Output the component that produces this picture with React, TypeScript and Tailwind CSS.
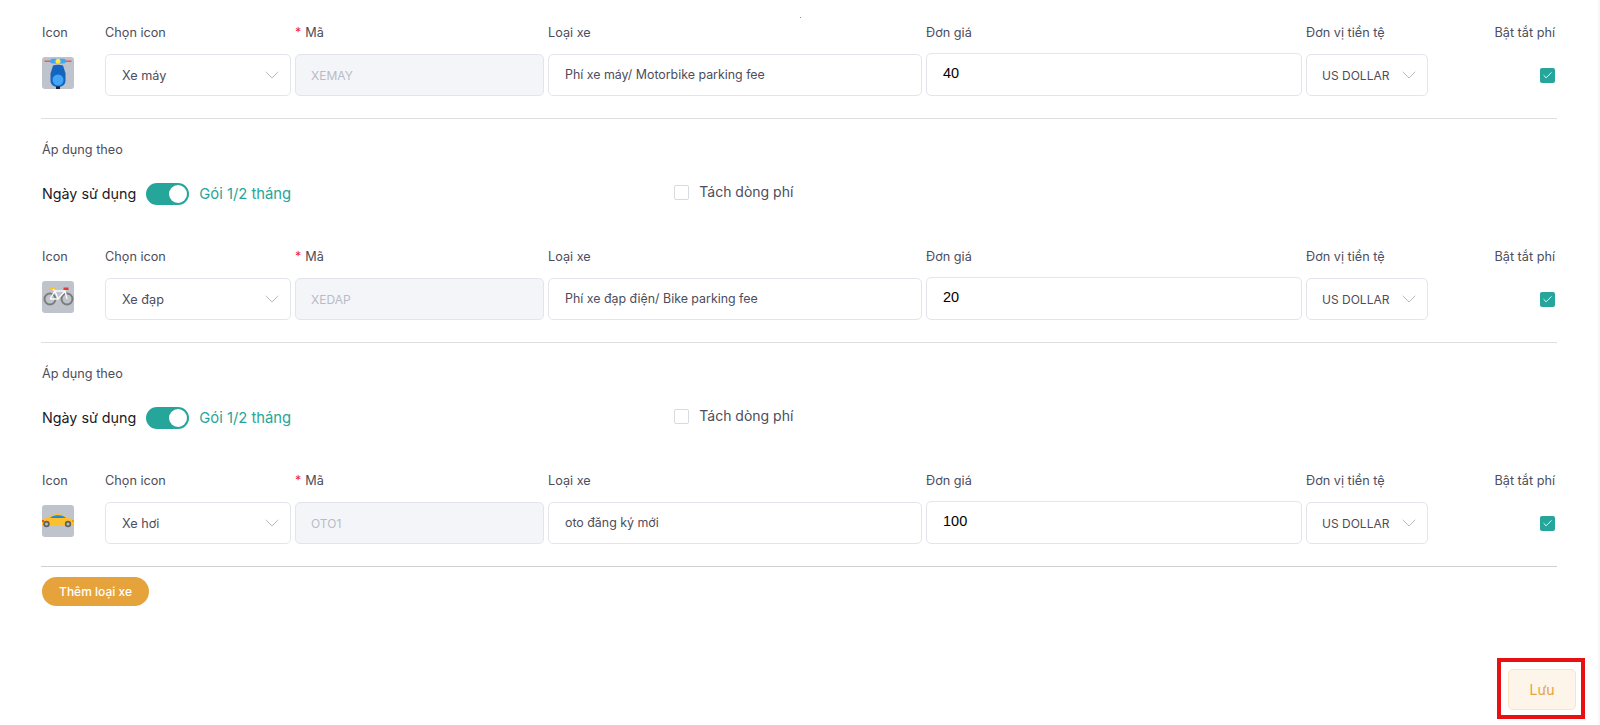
import React from 'react';
import { ChevronDown, Check } from 'lucide-react';

const font = "font-['Inter','Noto_Sans',sans-serif]";

const ScooterIcon = () => (
  <svg viewBox="0 0 32 32" className="w-full h-full">
    <rect x="2.500" y="3.500" width="6" height="1.400" fill="#ef5350" />
    <rect x="23.500" y="3.500" width="6" height="1.400" fill="#ef5350" />
    <rect x="8" y="1.800" width="16" height="4.800" rx="2.400" fill="#42a5f5" />
    <circle cx="16" cy="4.200" r="2.500" fill="#ffeb3b" />
    <path d="M11 8.500c3-1 7-1 10 0l2.500 8v7c0 4-3 6.500-7.500 6.500s-7.500-2.500-7.500-6.500v-7z" fill="#1565c0" />
    <circle cx="16" cy="23" r="5.500" fill="#42a5f5" />
    <rect x="14" y="29.500" width="4" height="2.500" fill="#212121" />
  </svg>
);

const BikeIcon = () => (
  <svg viewBox="0 0 32 32" className="w-full h-full" fill="none">
    <circle cx="8" cy="18" r="5.500" stroke="#7c7c7c" strokeWidth="2" />
    <circle cx="25" cy="18" r="5.500" stroke="#7c7c7c" strokeWidth="2" />
    <path d="M8 18l5-8h10l2 8M13 10l3 8 7-8M10.500 7.500l2.500 2.500M23 8v2M8 18h8" stroke="#fafafa" strokeWidth="1.400" />
    <rect x="7.500" y="6.500" width="6" height="1.500" fill="#fbc02d" />
    <rect x="21.500" y="6.500" width="5" height="2.500" fill="#e53935" />
  </svg>
);

const CarIcon = () => (
  <svg viewBox="0 0 32 32" className="w-full h-full">
    <path d="M0 16c0-2 3-3 6-3.500L10 10c5-1.500 9-1 12 .5l4 2.500c3 .5 6 1 6 3.500v4H0z" fill="#fbc02d" />
    <path d="M8 13l3-2c3-1 7-1 10 0l3 2z" fill="#1e88e5" />
    <rect x="0" y="15" width="2" height="2" fill="#ef5350" />
    <rect x="30" y="15" width="2" height="2" fill="#ff9800" />
    <circle cx="4.500" cy="19" r="3.200" fill="#616161" />
    <circle cx="4.500" cy="19" r="1.500" fill="#bdbdbd" />
    <circle cx="26" cy="19" r="3.200" fill="#616161" />
    <circle cx="26" cy="19" r="1.500" fill="#bdbdbd" />
  </svg>
);

const Label = ({ children, className = '' }: { children: React.ReactNode; className?: string }) => (
  <div className={`pt-px text-[12.700px] leading-[18px] text-[#4d4d5c] whitespace-nowrap ${className}`}>{children}</div>
);

const SelectBox = ({ value, width, textSize, padLeft }: { value: string; width: string; textSize: string; padLeft: string }) => (
  <div className={`${width} ${padLeft} h-[42px] shrink-0 rounded-[5px] border border-[#e4e4ec] bg-white flex items-center justify-between pr-[6px]`}>
    <span className={`${textSize} pt-px text-[#4d4d5c] whitespace-nowrap`}>{value}</span>
    <ChevronDown size={24} strokeWidth={0.8} className="text-[#a8a8b4] shrink-0" />
  </div>
);

const VehicleRow = ({ icon, type, code, name, price }: { icon: React.ReactNode; type: string; code: string; name: string; price: string }) => (
  <div>
    <div className="flex gap-[4px] pl-[42px] pr-[45px]">
      <div className="w-[59px] shrink-0"><Label>Icon</Label></div>
      <div className="w-[186px] shrink-0"><Label>Chọn icon</Label></div>
      <div className="w-[249px] shrink-0"><Label><span className="text-[#f5222d] mr-[4px]">*</span>Mã</Label></div>
      <div className="w-[374px] shrink-0"><Label>Loại xe</Label></div>
      <div className="w-[376px] shrink-0"><Label>Đơn giá</Label></div>
      <div className="w-[122px] shrink-0"><Label>Đơn vị tiền tệ</Label></div>
      <div className="flex-1 flex justify-end"><Label>Bật tắt phí</Label></div>
    </div>
    <div className="flex items-center gap-[4px] pl-[42px] pr-[45px] mt-[12px]">
      <div className="w-[59px] shrink-0 -mt-[4px]">
        <div className="w-[32px] h-[32px] rounded-[3px] bg-[#bfc3cc] overflow-hidden">{icon}</div>
      </div>
      <SelectBox value={type} width="w-[186px]" textSize="text-[12.700px]" padLeft="pl-[16px]" />
      <div className="w-[249px] h-[42px] shrink-0 rounded-[5px] border border-[#e4e4ec] bg-[#f4f5f9] flex items-center pl-[15px] pt-px text-[12px] text-[#b8bcc6]">{code}</div>
      <div className="w-[374px] h-[42px] shrink-0 rounded-[5px] border border-[#e4e4ec] bg-white flex items-center pl-[16px] pt-px text-[12.400px] text-[#4d4d5c]">{name}</div>
      <div className="w-[376px] h-[43px] -mt-[2px] shrink-0 rounded-[5px] border border-[#e4e4ec] bg-white flex items-center pl-[16px] font-['Liberation_Sans',sans-serif] text-[14.500px] text-black">{price}</div>
      <SelectBox value="US DOLLAR" width="w-[122px]" textSize="text-[12px]" padLeft="pl-[15px]" />
      <div className="flex-1 flex justify-end">
        <div className="w-[15px] h-[15px] rounded-[2px] bg-[#26a69a] flex items-center justify-center">
          <Check size={11} strokeWidth={2} className="text-white" />
        </div>
      </div>
    </div>
  </div>
);

const ApplyRow = () => (
  <div className="pl-[42px] pr-[45px]">
    <Label>Áp dụng theo</Label>
    <div className="flex items-center mt-[23px] h-[24px]">
      <span className="text-[14.300px] text-[#1a1a24] whitespace-nowrap">Ngày sử dụng</span>
      <div className="ml-[10px] w-[43px] h-[22px] rounded-full bg-[#26a69a] flex items-center justify-end pr-[2px]">
        <div className="w-[18px] h-[18px] rounded-full bg-white" />
      </div>
      <span className="ml-[10px] w-[475px] text-[14.800px] text-[#26a69a] whitespace-nowrap">Gói 1/2 tháng</span>
      <div className="w-[15px] h-[15px] rounded-[2px] border border-[#d9d9e0] bg-white -mt-[4px]" />
      <span className="ml-[10px] -mt-[6px] text-[14px] text-[#4d4d5c] whitespace-nowrap">Tách dòng phí</span>
    </div>
  </div>
);

const Divider = ({ className = '' }: { className?: string }) => (
  <div className={`ml-[41px] mr-[43px] h-px ${className}`} />
);

export default function App() {
  return (
    <div className={`relative w-[1600px] h-[725px] overflow-hidden bg-white pt-[23px] ${font}`}>
      {/* stray speck at the top of the page */}
      <div className="absolute left-[800px] top-[17px] w-px h-px bg-[#22c55e]" />
      <div className="absolute right-0 top-0 bottom-0 w-[2px] bg-[#f8f8f8]" />

      <VehicleRow icon={<ScooterIcon />} type="Xe máy" code="XEMAY" name="Phí xe máy/ Motorbike parking fee" price="40" />
      <Divider className="mt-[22px] mb-[21px] bg-[#dedee3]" />
      <ApplyRow />
      <div className="h-[41px]" />
      <VehicleRow icon={<BikeIcon />} type="Xe đạp" code="XEDAP" name="Phí xe đạp điện/ Bike parking fee" price="20" />
      <Divider className="mt-[22px] mb-[21px] bg-[#dedee3]" />
      <ApplyRow />
      <div className="h-[41px]" />
      <VehicleRow icon={<CarIcon />} type="Xe hơi" code="OTO1" name="oto đăng ký mới" price="100" />
      <Divider className="mt-[22px] bg-[#d0d0d4]" />

      <button className="ml-[42px] mt-[10px] w-[107px] h-[29px] rounded-full bg-[#e6a33c] text-white text-[12px] font-medium">Thêm loại xe</button>

      {/* save button with the red highlight drawn over the screenshot */}
      <div className="absolute left-[1497px] top-[658px] w-[88px] h-[61px] border-4 border-[#e81010] pl-[7px] pt-[7px]">
        <button className="block w-[68px] h-[41px] rounded-[5px] border border-[#fbe3c4] bg-[#fdf4ea] text-[#e6a33c] text-[14px]">Lưu</button>
      </div>
    </div>
  );
}
